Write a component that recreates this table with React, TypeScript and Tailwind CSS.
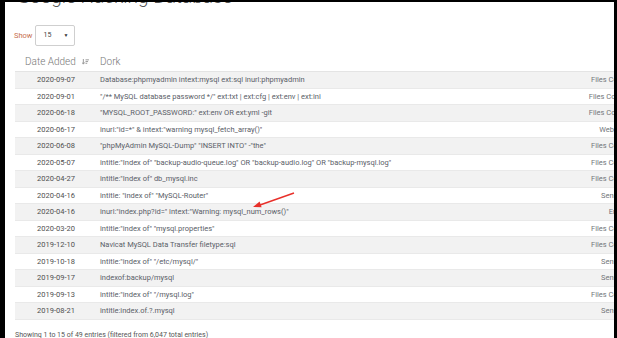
import React from "react";

// Rows shown in the GHDB listing
const rows: [string, string, string][] = [
  ["2020-09-07", "Database:phpmyadmin intext:mysql ext:sql inurl:phpmyadmin", "Files Containing Juicy Info"],
  ["2020-09-01", '"/** MySQL database password */" ext:txt | ext:cfg | ext:env | ext:ini', "Files Containing Passwords"],
  ["2020-06-18", '"MYSQL_ROOT_PASSWORD:" ext:env OR ext:yml -git', "Files Containing Passwords"],
  ["2020-06-17", 'inurl:"id=*" & intext:"warning mysql_fetch_array()"', "Web Server Detection"],
  ["2020-06-08", '"phpMyAdmin MySQL-Dump" "INSERT INTO" -"the"', "Files Containing Juicy Info"],
  ["2020-05-07", 'intitle:"Index of" "backup-audio-queue.log" OR "backup-audio.log" OR "backup-mysql.log"', "Files Containing Juicy Info"],
  ["2020-04-27", 'intitle:"Index of" db_mysql.inc', "Files Containing Juicy Info"],
  ["2020-04-16", 'intitle: "index of" "MySQL-Router"', "Sensitive Directories"],
  ["2020-04-16", 'inurl:"index.php?id=" intext:"Warning: mysql_num_rows()"', "Error Messages"],
  ["2020-03-20", 'intitle:"index of" "mysql.properties"', "Files Containing Juicy Info"],
  ["2019-12-10", "Navicat MySQL Data Transfer filetype:sql", "Files Containing Juicy Info"],
  ["2019-10-18", 'intitle:"index of" "/etc/mysql/"', "Sensitive Directories"],
  ["2019-09-17", "indexof:backup/mysql", "Sensitive Directories"],
  ["2019-09-13", 'intitle:"index of" "/mysql.log"', "Files Containing Juicy Info"],
  ["2019-08-21", "intitle:index.of.?.mysql", "Sensitive Directories"],
];

const SortIcon = () => (
  <svg width="7" height="6" viewBox="0 0 8 7" className="ml-[6px] mt-[1px]">
    <path d="M1.5 0v5.5M0 4l1.5 2 1.5-2" stroke="#8a8a8a" strokeWidth="1" fill="none" />
    <path d="M4 1h4M4 3h3M4 5h2" stroke="#8a8a8a" strokeWidth="1" />
  </svg>
);

export default function App() {
  return (
    <div className="w-[617px] h-[338px] bg-black pt-[2px] pl-[5px] pr-[3px] overflow-hidden" style={{ fontFamily: "Roboto, 'Liberation Sans', sans-serif" }}>
      <div className="relative bg-white h-full overflow-hidden">
        {/* page title, mostly scrolled off */}
        <div className="mt-[-16px] h-[22px] pl-[12px] text-[19px] leading-[22px] font-light text-[#555] whitespace-nowrap">
          Google Hacking Database
        </div>

        <div className="mt-[17px] pl-[9px] flex items-center h-[21px]">
          <span className="text-[7.5px] text-[#c8704f]">Show</span>
          <div className="ml-[2px] w-[40px] h-[21px] border border-[#cfcfcf] rounded-[2px] flex items-center justify-between pl-[8px] pr-[5px]">
            <span className="text-[7px] text-[#444]">15</span>
            <span className="text-[5px] text-[#333]">▼</span>
          </div>
        </div>

        <div className="ml-[10px] mt-[6px] w-[682px]">
          <div className="flex items-center h-[20px] border-b border-[#e4e4e4] text-[10px] font-light text-[#777]">
            <div className="w-[82px] pl-[10px] flex items-center">
              Date Added
              <SortIcon />
            </div>
            <div className="w-[487px] pl-[3px]">Dork</div>
            <div className="w-[102px] text-center">Category</div>
          </div>
          {rows.map((r, i) => (
            <div
              key={i}
              className={`flex items-center h-[16.5px] border-b border-[#e9e9e9] text-[7.5px] whitespace-nowrap ${i % 2 === 0 ? "bg-[#f2f2f2]" : "bg-white"}`}
            >
              <div className="w-[82px] text-center text-[#4f4f4f]">{r[0]}</div>
              <div className="w-[487px] pl-[3px] text-[#5a6068] overflow-hidden">{r[1]}</div>
              <div className="w-[102px] text-center text-[#72767a]">{r[2]}</div>
            </div>
          ))}
        </div>

        <div className="ml-[10px] mt-[10px] text-[7px] leading-[10px] text-[#555] whitespace-nowrap">
          Showing 1 to 15 of 49 entries (filtered from 6,047 total entries)
        </div>

        {/* red annotation arrow */}
        <svg className="absolute inset-0 pointer-events-none" width="609" height="336">
          <line x1="289" y1="191" x2="255" y2="203" stroke="#e8302a" strokeWidth="1.4" />
          <polygon points="248,205 256.6,205.2 254.6,199.6" fill="#e8302a" />
        </svg>
      </div>
    </div>
  );
}
